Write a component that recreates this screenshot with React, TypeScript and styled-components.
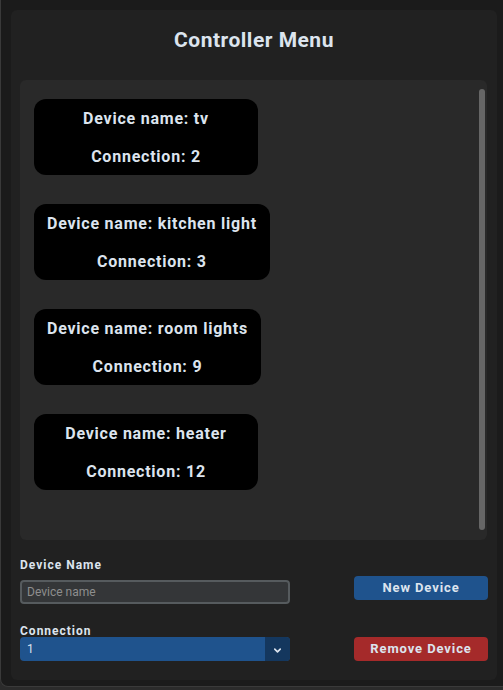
import React from 'react';
import styled, { createGlobalStyle } from 'styled-components';
import { ChevronDown } from 'lucide-react';

const devices = [
  { name: 'tv', connection: 2 },
  { name: 'kitchen light', connection: 3 },
  { name: 'room lights', connection: 9 },
  { name: 'heater', connection: 12 },
];

const App = () => {
  return (
    <>
      <GlobalStyle />
      <Window>
        <Panel>
          <Title>Controller Menu</Title>
          <DeviceList>
            <Cards>
              {devices.map((device, index) => (
                <Card key={index}>
                  <CardLine>Device name: {device.name}</CardLine>
                  <CardLine>Connection: {device.connection}</CardLine>
                </Card>
              ))}
            </Cards>
            <Scrollbar />
          </DeviceList>
          <Form>
            <Field>
              <Label top={18} gap={8}>Device Name</Label>
              <TextInput placeholder="Device name" />
            </Field>
            <Button color="#1f538d" bottom={4}>New Device</Button>
            <Field>
              <Label top={21} gap={0}>Connection</Label>
              <Select>
                <SelectValue>1</SelectValue>
                <SelectArrow>
                  <ChevronDown size={11} strokeWidth={3.5} color="#dce4ee" />
                </SelectArrow>
              </Select>
            </Field>
            <Button color="#a52a2a" bottom={0}>Remove Device</Button>
          </Form>
        </Panel>
      </Window>
    </>
  );
};

export default App;

const GlobalStyle = createGlobalStyle`
  body {
    margin: 0;
    background: #2b2b2b;
    font-family: Roboto, "Liberation Sans", sans-serif;
    overflow: hidden;
  }
`;

const Window = styled.div`
  width: 520px;
  height: 687px;
  box-sizing: border-box;
  background: #1b1b1b;
  border-left: 1px solid #3a3a3a;
  border-bottom: 1px solid #3a3a3a;
  border-bottom-left-radius: 8px;
  padding: 10px 0 0 10px;
`;

const Panel = styled.div`
  width: 486px;
  height: 670px;
  box-sizing: border-box;
  background: #212121;
  border-radius: 6px;
  padding: 18px 9px 19px 9px;
  display: flex;
  flex-direction: column;
`;

const Title = styled.h1`
  margin: 0;
  text-align: center;
  font-size: 21px;
  line-height: 24px;
  font-weight: 700;
  letter-spacing: 0.5px;
  color: #dce4ee;
`;

const DeviceList = styled.div`
  margin-top: 28px;
  margin-right: 1px;
  height: 460px;
  background: #292929;
  border-radius: 6px;
  display: flex;
  padding: 19px 2px 10px 14px;
  box-sizing: border-box;
`;

const Cards = styled.div`
  flex: 1;
  display: flex;
  flex-direction: column;
  align-items: flex-start;
  gap: 29px;
`;

const Card = styled.div`
  background: #000;
  border-radius: 12px;
  min-width: 224px;
  height: 76px;
  box-sizing: border-box;
  padding: 8px 13px 0;
  display: flex;
  flex-direction: column;
  align-items: center;
  gap: 14px;
`;

const CardLine = styled.div`
  font-size: 16px;
  line-height: 24px;
  font-weight: 700;
  letter-spacing: 0.77px;
  color: #dce4ee;
  white-space: nowrap;
`;

const Scrollbar = styled.div`
  width: 6px;
  margin-top: -10px;
  height: 441px;
  background: #666;
  border-radius: 3px;
`;

const Form = styled.div`
  display: grid;
  grid-template-columns: 270px 1fr;
  justify-items: start;
`;

const Field = styled.div`
  display: flex;
  flex-direction: column;
  width: 270px;
`;

const Label = styled.label<{ top: number; gap: number }>`
  margin-top: ${p => p.top}px;
  margin-bottom: ${p => p.gap}px;
  font-size: 12px;
  line-height: ${p => (p.gap ? 14 : 12)}px;
  font-weight: 700;
  letter-spacing: 1px;
  color: #dce4ee;
`;

const TextInput = styled.input`
  height: 24px;
  box-sizing: border-box;
  background: #343638;
  border: 2px solid #565b5e;
  border-radius: 4px;
  padding: 0 5px;
  color: #dce4ee;
  font-family: Roboto, "Liberation Sans", sans-serif;
  font-size: 12px;
  outline: none;

  &::placeholder {
    color: #8e8e8e;
  }
`;

const Select = styled.div`
  height: 24px;
  display: flex;
  background: #1f538d;
  border-radius: 4px;
  overflow: hidden;
`;

const SelectValue = styled.div`
  flex: 1;
  padding-left: 7px;
  font-size: 12px;
  line-height: 24px;
  color: #dce4ee;
`;

const SelectArrow = styled.div`
  width: 25px;
  background: #14375e;
  display: flex;
  align-items: center;
  justify-content: center;
  padding-top: 2px;
  box-sizing: border-box;
`;

const Button = styled.button<{ color: string; bottom: number }>`
  justify-self: end;
  align-self: end;
  margin-bottom: ${p => p.bottom}px;
  width: 134px;
  height: 24px;
  padding: 0 0 2px;
  border: none;
  border-radius: 4px;
  background: ${p => p.color};
  color: #dce4ee;
  font-family: Roboto, "Liberation Sans", sans-serif;
  font-size: 13px;
  font-weight: 700;
  letter-spacing: 0.9px;
  cursor: pointer;
`;
